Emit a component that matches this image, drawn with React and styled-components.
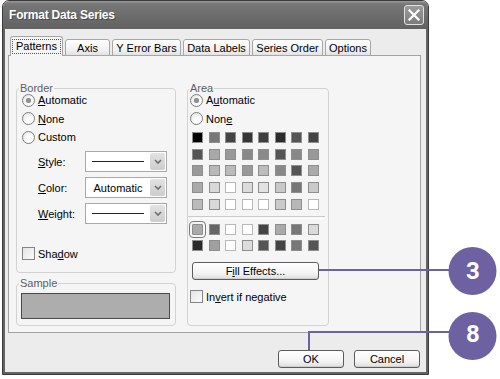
import React from "react";
import styled, { createGlobalStyle } from "styled-components";

const GlobalStyle = createGlobalStyle`
	html, body {
		margin: 0;
		padding: 0;
		background: #fff;
	}
	body {
		width: 500px;
		height: 379px;
		overflow: hidden;
		font-family: "Liberation Sans", Arial, sans-serif;
		font-size: 11px;
		color: #000;
	}
`;

const Stage = styled.div`
	position: relative;
	width: 500px;
	height: 379px;
`;

const Window = styled.div`
	display: flex;
	flex-direction: column;
	width: 427px;
	height: 375px;
	margin-left: 2px;
	box-sizing: border-box;
	border: 1px solid #3a3a3a;
	border-radius: 7px 7px 0 0;
	overflow: hidden;
	background: #ececec;
`;

const TitleBar = styled.div`
	display: flex;
	align-items: center;
	justify-content: space-between;
	height: 28px;
	flex: none;
	padding: 0 4px 0 6px;
	background: linear-gradient(#9a9a9a 0, #767676 3px, #6c6c6c 55%, #626262 100%);
`;

const Title = styled.span`
	color: #fff;
	font-weight: bold;
	font-size: 12px;
	letter-spacing: -0.2px;
	text-shadow: 1px 1px 0 #4a4a4a;
`;

const CloseButton = styled.div`
	display: flex;
	align-items: center;
	justify-content: center;
	width: 20px;
	height: 20px;
	box-sizing: border-box;
	border: 1px solid #e2e2e2;
	border-radius: 3px;
	background: linear-gradient(#9c9c9c, #7c7c7c);
`;

const Body = styled.div`
	display: flex;
	flex-direction: column;
	flex: 1;
	padding: 7px 5px 0 3px;
	border: solid #646464;
	border-width: 0 2px 2px;
`;

const TabRow = styled.div`
	display: flex;
	align-items: flex-end;
	gap: 2px;
	height: 20px;
	padding-left: 2px;
	margin-bottom: -1px;
`;

const Tab = styled.div`
	position: relative;
	z-index: ${({ active }) => (active ? 2 : 1)};
	display: flex;
	align-items: center;
	justify-content: center;
	width: ${({ width }) => width}px;
	height: ${({ active }) => (active ? 20 : 17)}px;
	box-sizing: border-box;
	border: 1px solid #a6a6a6;
	border-bottom: ${({ active }) => (active ? "none" : "1px solid #a6a6a6")};
	border-radius: 3px 3px 0 0;
	background: ${({ active }) =>
		active ? "#f5f5f5" : "linear-gradient(#ffffff, #f0f0f0 70%, #e2e2e2)"};
	padding-top: ${({ active }) => (active ? 0 : 1)}px;
`;

const FocusRing = styled.span`
	padding: 0 3px;
	line-height: 13px;
	border: 1px dotted #555;
`;

const Panel = styled.div`
	display: flex;
	gap: 11px;
	height: 278px;
	box-sizing: border-box;
	padding: 32px 7px 6px;
	border: 1px solid #a2a2a2;
	background: #f5f5f5;
`;

const Column = styled.div`
	display: flex;
	flex-direction: column;
	gap: 10px;
	width: ${({ width }) => width}px;
`;

const GroupBox = styled.div`
	display: flex;
	flex-direction: column;
	box-sizing: border-box;
	flex: ${({ grow }) => (grow ? 1 : "none")};
	height: ${({ height }) => (height ? `${height}px` : "auto")};
	padding: ${({ padding }) => padding || "0 0 0 5px"};
	border: 1px solid #d2d2d2;
	border-radius: 4px;
`;

const Caption = styled.span`
	align-self: flex-start;
	margin: -7px 0 -4px -3px;
	padding: 0 1px;
	line-height: 13px;
	background: #f5f5f5;
	color: #5e5e5e;
`;

const Key = styled.span`
	text-decoration: underline;
`;

const OptionRow = styled.div`
	display: flex;
	align-items: center;
	gap: 3px;
	height: 18.5px;
	margin-left: ${({ shift }) => shift || 0}px;
`;

const RadioCircle = styled.span`
	display: flex;
	align-items: center;
	justify-content: center;
	width: 13px;
	height: 13px;
	box-sizing: border-box;
	border-radius: 50%;
	border: 1px solid #7e7e7e;
	background: radial-gradient(circle at 65% 65%, #ffffff 30%, #dedede);
	&::after {
		content: "";
		width: 5px;
		height: 5px;
		border-radius: 50%;
		background: ${({ checked }) => (checked ? "#909090" : "transparent")};
		box-shadow: ${({ checked }) => (checked ? "0 0 1px #aaa" : "none")};
	}
`;

const CheckRow = styled.div`
	display: flex;
	align-items: center;
	gap: 3px;
	margin-top: ${({ top }) => top}px;
	margin-left: ${({ shift }) => shift || 0}px;
`;

const CheckBox = styled.span`
	width: 13px;
	height: 13px;
	box-sizing: border-box;
	border: 1px solid #858585;
	background: linear-gradient(135deg, #e4e4e4, #fbfbfb);
`;

const FieldList = styled.div`
	display: flex;
	flex-direction: column;
	gap: 5px;
	margin-top: 4.5px;
	padding-left: 16px;
`;

const FieldRow = styled.div`
	display: flex;
	align-items: center;
	height: 21px;
`;

const FieldLabel = styled.span`
	width: 47px;
`;

const Select = styled.div`
	display: flex;
	width: 82px;
	height: 21px;
	box-sizing: border-box;
	border: 1px solid #a9a9a9;
	background: #fff;
`;

const SelectValue = styled.div`
	display: flex;
	flex: 1;
	align-items: center;
	justify-content: center;
	padding-left: 1px;
`;

const LineSample = styled.span`
	width: 52px;
	height: 1px;
	background: #222;
`;

const SelectArrow = styled.div`
	display: flex;
	align-items: center;
	justify-content: center;
	width: 15px;
	margin: 1px;
	border-radius: 2px;
	background: linear-gradient(#e2e2e2, #cdcdcd);
`;

const SampleBox = styled.div`
	height: 26px;
	margin: 7px 5px 0 -1px;
	box-sizing: border-box;
	border: 1px solid #4a4a4a;
	background: #adadad;
`;

const SwatchGrid = styled.div`
	display: grid;
	grid-template-columns: repeat(8, 11px);
	column-gap: 5.57px;
	row-gap: 5.67px;
	margin-top: ${({ top }) => top}px;
`;

const Swatch = styled.span`
	width: 11px;
	height: 11px;
	box-sizing: border-box;
	border: 1px solid ${({ color }) => (color === "#fff" ? "#b8b8b8" : "#8e8e8e")};
	background: ${({ color }) => color};
	outline: ${({ selected }) => (selected ? "1px solid #7a7a7a" : "none")};
	outline-offset: 2px;
	border-radius: ${({ selected }) => (selected ? 1 : 0)}px;
`;

const Separator = styled.div`
	height: 1px;
	margin: 6px 3px 0 -4px;
	border-top: 1px solid #cbcbcb;
	border-bottom: 1px solid #ffffff;
`;

const Button = styled.div`
	display: flex;
	align-items: center;
	justify-content: center;
	width: ${({ width }) => width}px;
	height: 18px;
	box-sizing: border-box;
	margin-top: ${({ top }) => top || 0}px;
	border: 1px solid #5c5c5c;
	border-radius: 3px;
	background: linear-gradient(#ffffff, #f3f3f3 65%, #dddddd);
	box-shadow: inset 0 -1px 0 #cfcfcf;
`;

const ButtonRow = styled.div`
	display: flex;
	justify-content: flex-end;
	gap: 10px;
	margin-top: 17px;
	padding-right: 1px;
`;

const Overlay = styled.svg`
	position: absolute;
	left: 0;
	top: 0;
	pointer-events: none;
`;

const TABS = [
	{ label: "Patterns", width: 53, active: true },
	{ label: "Axis", width: 45 },
	{ label: "Y Error Bars", width: 69 },
	{ label: "Data Labels", width: 67 },
	{ label: "Series Order", width: 71 },
	{ label: "Options", width: 46 },
];

const PALETTE = [
	["#000", "#777", "#444", "#363636", "#3e3e3e", "#2c2c2c", "#555", "#444"],
	["#555", "#a8a8a8", "#999", "#888", "#8a8a8a", "#555", "#888", "#999"],
	["#999", "#b8b8b8", "#bbb", "#999", "#bcbcbc", "#888", "#555", "#aaa"],
	["#aaa", "#d8d8d8", "#fff", "#dcdcdc", "#e2e2e2", "#c8c8c8", "#777", "#cacaca"],
	["#bbb", "#d8d8d8", "#fff", "#fff", "#fff", "#cacaca", "#b8b8b8", "#fff"],
];

const EXTRA = [
	["#aaa", "#666", "#fff", "#fff", "#444", "#aaa", "#777", "#dadada"],
	["#2a2a2a", "#a0a0a0", "#fff", "#dcdcdc", "#555", "#444", "#777", "#555"],
];

const Chevron = () => (
	<svg width="8" height="6" viewBox="0 0 8 6">
		<polyline points="1,1 4,4 7,1" fill="none" stroke="#6e6e6e" strokeWidth="1.6" />
	</svg>
);

const Radio = ({ checked, children, shift }) => (
	<OptionRow shift={shift}>
		<RadioCircle checked={checked} />
		<span>{children}</span>
	</OptionRow>
);

const Dropdown = ({ children }) => (
	<Select>
		<SelectValue>{children}</SelectValue>
		<SelectArrow>
			<Chevron />
		</SelectArrow>
	</Select>
);

const Swatches = ({ rows, top, selected }) => (
	<SwatchGrid top={top}>
		{rows.flatMap((row, r) =>
			row.map((color, c) => (
				<Swatch
					key={`${r}-${c}`}
					color={color}
					selected={selected && r === 0 && c === 0}
				/>
			))
		)}
	</SwatchGrid>
);

const PURPLE = "#6d61a2";

const Callouts = () => (
	<Overlay width="500" height="379" viewBox="0 0 500 379">
		<line x1="319" y1="270" x2="452" y2="270" stroke={PURPLE} strokeWidth="2" />
		<polyline
			points="309,350 309,332 452,332"
			fill="none"
			stroke={PURPLE}
			strokeWidth="2"
		/>
		<circle cx="472.5" cy="271" r="24" fill={PURPLE} />
		<circle cx="472.5" cy="336" r="24" fill={PURPLE} />
		<text
			x="473"
			y="279"
			textAnchor="middle"
			fill="#fff"
			fontFamily="Roboto, sans-serif"
			fontWeight="bold"
			fontSize="24"
		>
			3
		</text>
		<text
			x="473"
			y="342"
			textAnchor="middle"
			fill="#fff"
			fontFamily="Roboto, sans-serif"
			fontWeight="bold"
			fontSize="24"
		>
			8
		</text>
	</Overlay>
);

const App = () => (
	<Stage>
		<GlobalStyle />
		<Window>
			<TitleBar>
				<Title>Format Data Series</Title>
				<CloseButton>
					<svg width="12" height="12" viewBox="0 0 12 12">
						<path
							d="M1.5 1.5 L10.5 10.5 M10.5 1.5 L1.5 10.5"
							stroke="#fff"
							strokeWidth="2.2"
							strokeLinecap="square"
						/>
					</svg>
				</CloseButton>
			</TitleBar>
			<Body>
				<TabRow>
					{TABS.map((tab) => (
						<Tab key={tab.label} width={tab.width} active={tab.active}>
							{tab.active ? <FocusRing>{tab.label}</FocusRing> : tab.label}
						</Tab>
					))}
				</TabRow>
				<Panel>
					<Column width={160}>
						<GroupBox grow>
							<Caption>Border</Caption>
							<Radio checked>
								<Key>A</Key>utomatic
							</Radio>
							<Radio>
								<Key>N</Key>one
							</Radio>
							<Radio>Custom</Radio>
							<FieldList>
								<FieldRow>
									<FieldLabel>
										<Key>S</Key>tyle:
									</FieldLabel>
									<Dropdown>
										<LineSample />
									</Dropdown>
								</FieldRow>
								<FieldRow>
									<FieldLabel>
										<Key>C</Key>olor:
									</FieldLabel>
									<Dropdown>Automatic</Dropdown>
								</FieldRow>
								<FieldRow>
									<FieldLabel>
										<Key>W</Key>eight:
									</FieldLabel>
									<Dropdown>
										<LineSample />
									</Dropdown>
								</FieldRow>
							</FieldList>
							<CheckRow top={23}>
								<CheckBox />
								<span>
									Sha<Key>d</Key>ow
								</span>
							</CheckRow>
						</GroupBox>
						<GroupBox height={43}>
							<Caption>Sample</Caption>
							<SampleBox />
						</GroupBox>
					</Column>
					<Column width={142}>
						<GroupBox grow padding="0 0 0 4px">
							<Caption>Area</Caption>
							<Radio checked shift={-2}>
								A<Key>u</Key>tomatic
							</Radio>
							<Radio shift={-2}>
								Non<Key>e</Key>
							</Radio>
							<Swatches rows={PALETTE} top={4} />
							<Separator />
							<Swatches rows={EXTRA} top={5} selected />
							<Button width={127} top={11}>
								F<Key>i</Key>ll Effects...
							</Button>
							<CheckRow top={10} shift={-2}>
								<CheckBox />
								<span>
									In<Key>v</Key>ert if negative
								</span>
							</CheckRow>
						</GroupBox>
					</Column>
				</Panel>
				<ButtonRow>
					<Button width={66}>OK</Button>
					<Button width={66}>Cancel</Button>
				</ButtonRow>
			</Body>
		</Window>
		<Callouts />
	</Stage>
);

export default App;
